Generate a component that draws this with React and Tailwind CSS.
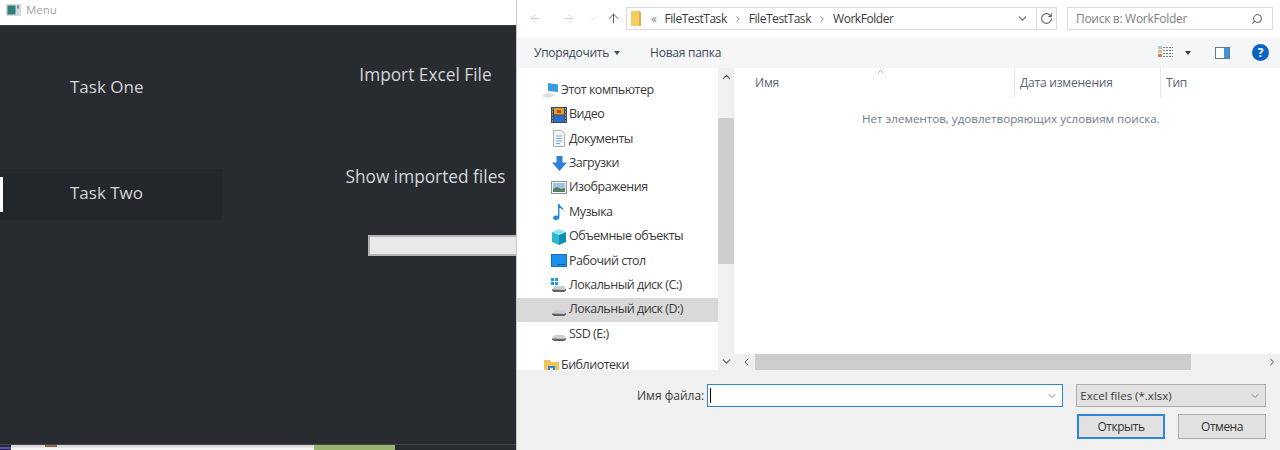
import { ArrowLeft, ArrowRight, ArrowUp, ChevronDown, ChevronUp, ChevronLeft, ChevronRight, RotateCw, Search } from "lucide-react";

const font = "font-['Open_Sans','Noto_Sans',sans-serif]";

function VideoIcon() {
  return (
    <svg width="16" height="16" viewBox="0 0 16 16">
      <rect x="0" y="0" width="16" height="16" fill="#3f4a58" />
      <rect x="3" y="1" width="10" height="6.5" fill="#d8a520" />
      <rect x="3" y="8.5" width="10" height="6.5" fill="#2a6fd0" />
      <rect x="6" y="3" width="4" height="3" fill="#c9402c" />
      <path d="M1 2h1M1 5h1M1 8h1M1 11h1M1 14h1M14 2h1M14 5h1M14 8h1M14 11h1M14 14h1" stroke="#e8e8e8" />
    </svg>
  );
}

function DocIcon() {
  return (
    <svg width="16" height="17" viewBox="0 0 16 17">
      <path d="M2.5.5h8l3 3v13h-11z" fill="#f2f4f6" stroke="#a9b1b9" />
      <path d="M5 6h6M5 8.5h6M5 11h6M5 13.5h4" stroke="#7fa7cf" strokeWidth="1.2" />
    </svg>
  );
}

function DownloadIcon() {
  return (
    <svg width="15" height="15" viewBox="0 0 15 15">
      <path d="M4.5 0h6v6.5H15L7.5 15 0 6.5h4.5z" fill="#2f7fd6" />
    </svg>
  );
}

function PicturesIcon() {
  return (
    <svg width="16" height="13" viewBox="0 0 16 13">
      <rect x=".5" y=".5" width="15" height="12" fill="#f4f6f8" stroke="#8b949c" />
      <rect x="2" y="2" width="12" height="9" fill="#9fc4e4" />
      <path d="M2 8l4-2 4 2 4-1v4H2z" fill="#55805f" />
    </svg>
  );
}

function MusicIcon() {
  return (
    <svg width="12" height="16" viewBox="0 0 12 16">
      <path d="M5 0h1.4c.3 2.6 4.6 3.2 4 7-.6-2-2.400-2.600-4-3v9.500C6.400 15 5 16 3 16s-3-.8-3-2 1.500-2.400 3.200-2.400c.7 0 1.300.1 1.800.4z" fill="#1e88e5" />
    </svg>
  );
}

function CubeIcon() {
  return (
    <svg width="16" height="16" viewBox="0 0 16 16">
      <path d="M8 0l7 3-7 3-7-3z" fill="#8ee6ee" />
      <path d="M1 3l7 3v10l-7-3z" fill="#2cb7cf" />
      <path d="M15 3l-7 3v10l7-3z" fill="#0f8fb0" />
    </svg>
  );
}

function DesktopIcon() {
  return (
    <svg width="16" height="13" viewBox="0 0 16 13">
      <rect x=".5" y=".5" width="15" height="12" fill="#1e90ee" stroke="#0f6fbf" />
      <rect x="6" y="10" width="8" height="1" fill="#0b5da3" />
    </svg>
  );
}

function DiskIcon({ windows }) {
  return (
    <svg width="16" height="15" viewBox="0 0 16 15">
      {windows && (
        <g fill="#1e9be8">
          <rect x="0" y="0" width="3" height="3" />
          <rect x="4" y="0" width="3" height="3" />
          <rect x="0" y="4" width="3" height="3" />
          <rect x="4" y="4" width="3" height="3" />
        </g>
      )}
      <path d="M1 11l3-3h9l2 3v1.500L13 14H3l-2-1.500z" fill="#c9ced2" />
      <path d="M1 11.500l12 .5 2-1v1.500L13 14H3l-2-1.500z" fill="#5c6166" />
    </svg>
  );
}

function PcIcon() {
  return (
    <svg width="18" height="15" viewBox="0 0 18 15">
      <path d="M6 0l10 1.500V9L6 8z" fill="#3a9ae0" />
      <path d="M0 13l5-3 6 1 2 1.500L7 15z" fill="#d8dde2" />
    </svg>
  );
}

function LibraryIcon() {
  return (
    <svg width="15" height="14" viewBox="0 0 15 14">
      <path d="M0 1h6l1 2h8v11H0z" fill="#f0c65a" />
      <rect x="4" y="7" width="7" height="7" fill="#2f86d6" />
      <rect x="6" y="9" width="3" height="3" fill="#f0e3b0" />
    </svg>
  );
}

const navItems = [
  { label: "Этот компьютер", icon: <PcIcon />, top: true },
  { label: "Видео", icon: <VideoIcon /> },
  { label: "Документы", icon: <DocIcon /> },
  { label: "Загрузки", icon: <DownloadIcon /> },
  { label: "Изображения", icon: <PicturesIcon /> },
  { label: "Музыка", icon: <MusicIcon /> },
  { label: "Объемные объекты", icon: <CubeIcon /> },
  { label: "Рабочий стол", icon: <DesktopIcon /> },
  { label: "Локальный диск (C:)", icon: <DiskIcon windows /> },
  { label: "Локальный диск (D:)", icon: <DiskIcon />, selected: true },
  { label: "SSD (E:)", icon: <DiskIcon /> },
];

function NavRow({ item }) {
  return (
    <div className={`flex h-[24.400px] shrink-0 items-center ${item.top ? "pl-[24px]" : "pl-[32px]"} ${item.selected ? "bg-[#d9d9d9]" : ""}`}>
      <span className="flex w-[20px] shrink-0 justify-center">{item.icon}</span>
      <span className="text-[12.500px] tracking-[-0.5px] whitespace-nowrap text-[#3a3a3a]">{item.label}</span>
    </div>
  );
}

function LeftWindow() {
  return (
    <div className="flex h-[450px] w-[517px] shrink-0 flex-col border-r border-[#c9c9c9] bg-white">
      <div className="flex h-[25px] shrink-0 items-center gap-[5px] pb-[6px] pl-[6px]">
        <svg width="15" height="12" viewBox="0 0 15 12">
          <rect width="15" height="12" fill="#d5dade" />
          <rect x="1.500" y="1.500" width="8" height="9" fill="#2f7f78" />
          <rect x="11" y="1.500" width="2" height="3" fill="#7d8a94" />
        </svg>
        <span className="text-[11.500px] text-[#a3a3a3]">Menu</span>
      </div>
      <div className="flex min-h-0 flex-1 border-t border-[#3a3c40] bg-[#282b30]">
        <div className="flex w-[222px] shrink-0 flex-col pt-[36px]">
          <div className="flex h-[50px] items-center pl-[70px] text-[17px] text-[#d3d6d9]">Task One</div>
          <div className="relative mt-[57px] flex h-[51px] items-center bg-[#23262a] pb-[3px] pl-[70px] text-[17px] text-[#d3d6d9]">
            <span className="absolute top-[8px] left-0 h-[35px] w-[3px] bg-white" />
            Task Two
          </div>
        </div>
        <div className="flex min-w-0 flex-1 flex-col items-center overflow-hidden pl-[113px]">
          <div className="mt-[35px] text-[17.300px] leading-[28px] whitespace-nowrap text-[#d3d6d9]">Import Excel File</div>
          <div className="mt-[74px] text-[17.300px] leading-[28px] whitespace-nowrap text-[#d3d6d9]">Show imported files</div>
          <div className="mt-[44px] ml-[33px] h-[21px] w-[149px] shrink-0 self-start border-2 border-r-0 border-[#b4b4b4] bg-[#e9e9e9]" />
        </div>
      </div>
      <div className="flex h-[6px] shrink-0 border-t border-[#44474b] bg-[#282b30]">
        <div className="mt-[2px] h-[2px] w-[11px] bg-[#5a4fc0]" />
        <div className="relative h-full w-[303px] bg-gradient-to-b from-[#cfcfcf] to-white">
          <span className="absolute top-0 left-[34px] h-[2px] w-[12px] bg-[#8a6a3c]" />
        </div>
        <div className="h-full w-[81px] bg-[#98b56f]" />
      </div>
    </div>
  );
}

function Dialog() {
  return (
    <div className="flex h-[450px] min-w-0 flex-1 flex-col bg-white text-[#3a3a3a]">
      <div className="flex h-[37px] shrink-0 items-center pr-[7px] pl-[11px]">
        <ArrowLeft size={15} strokeWidth={1.3} className="text-[#c9cdd1]" />
        <ArrowRight size={15} strokeWidth={1.3} className="ml-[18px] text-[#c9cdd1]" />
        <ChevronDown size={11} strokeWidth={1.3} className="ml-[12px] text-[#c9cdd1]" />
        <ArrowUp size={15} strokeWidth={1.5} className="ml-[7px] text-[#555]" />
        <div className="ml-[5px] flex h-[23px] w-[431px] items-center border border-[#d9d9d9] pr-[1px] pl-[4px] tracking-[-0.45px]">
          <svg width="10" height="15" viewBox="0 0 10 15">
            <path d="M0 0h8l2 1.500V15H0z" fill="#f3cd62" />
            <path d="M8 0l2 1.500V15H8z" fill="#e0ad3c" />
          </svg>
          <span className="ml-[10px] text-[12px] text-[#808080]">«</span>
          <span className="ml-[8px] text-[12px] text-[#3a3a3a]">FileTestTask</span>
          <ChevronRight size={10} className="mx-[6px] text-[#777]" />
          <span className="text-[12px] text-[#3a3a3a]">FileTestTask</span>
          <ChevronRight size={10} className="mx-[6px] text-[#777]" />
          <span className="text-[12px] text-[#3a3a3a]">WorkFolder</span>
          <ChevronDown size={13} className="mr-[7px] ml-auto text-[#666]" />
          <div className="flex h-full w-[19px] items-center justify-center border-l border-[#d9d9d9]">
            <RotateCw size={13} className="text-[#666]" />
          </div>
        </div>
        <div className="ml-auto flex h-[23px] w-[206px] items-center justify-between border border-[#d9d9d9] pr-[9px] pl-[8px]">
          <span className="text-[12px] tracking-[-0.3px] text-[#808080]">Поиск в: WorkFolder</span>
          <Search size={12} className="-scale-x-100 text-[#555]" />
        </div>
      </div>

      <div className="flex h-[31px] shrink-0 items-center bg-[#f5f6f7] pr-[11px] pl-[17px] tracking-[-0.25px]">
        <span className="text-[12px] text-[#3c4a5a]">Упорядочить</span>
        <span className="ml-[5px] h-0 w-0 border-x-[3px] border-t-[4px] border-x-transparent border-t-[#3c4a5a]" />
        <span className="ml-[30px] text-[12px] text-[#3c4a5a]">Новая папка</span>
        <svg className="ml-auto" width="16" height="13" viewBox="0 0 16 13">
          <path d="M5 1.500h10M5 4.500h10M5 7.500h10M5 10.500h10" stroke="#7a7a7a" strokeDasharray="2 1" />
          <rect x="0" y="0" width="4" height="3" fill="#a5c8e8" />
          <rect x="0" y="4" width="4" height="3" fill="#d9c27a" />
          <rect x="0" y="8" width="4" height="3" fill="#cc7a6a" />
        </svg>
        <span className="ml-[11px] h-0 w-0 border-x-[3.500px] border-t-[4px] border-x-transparent border-t-[#2c3e50]" />
        <div className="ml-[24px] flex h-[12px] w-[15px] border border-[#6e7780]">
          <span className="w-[8px] bg-white" />
          <span className="flex-1 bg-[#3a96dd]" />
        </div>
        <span className="ml-[22px] flex h-[17px] w-[17px] items-center justify-center rounded-full bg-[#0b63c5] text-[12px] font-bold text-white">?</span>
      </div>

      <div className="flex min-h-0 flex-1">
        <div className="flex w-[201px] shrink-0 flex-col overflow-hidden pt-[10px]">
          {navItems.map((item) => (
            <NavRow key={item.label} item={item} />
          ))}
          <div className="mt-[10px] flex shrink-0 items-center pl-[24px]">
            <span className="flex w-[20px] shrink-0 justify-center"><LibraryIcon /></span>
            <span className="text-[12.500px] tracking-[-0.5px] whitespace-nowrap text-[#3a3a3a]">Библиотеки</span>
          </div>
        </div>
        <div className="flex w-[16px] shrink-0 flex-col items-center bg-[#f0f0f0]">
          <ChevronUp size={13} strokeWidth={2} className="mt-[1px] h-[16px] text-[#555]" />
          <div className="mt-[33px] h-[146px] w-full bg-[#cdcdcd]" />
          <ChevronDown size={13} strokeWidth={2} className="mt-auto mb-[2px] text-[#555]" />
        </div>
        <div className="flex min-w-0 flex-1 flex-col">
          <div className="flex h-[30px] shrink-0 text-[12px] tracking-[-0.2px] text-[#5a6470]">
            <div className="relative flex w-[281px] items-center border-r border-[#e5e5e5] pl-[21px]">
              Имя
              <ChevronUp size={9} className="absolute -top-[1px] left-[142px] text-[#999]" />
            </div>
            <div className="flex w-[146px] items-center border-r border-[#e5e5e5] pl-[5px]">Дата изменения</div>
            <div className="flex items-center pl-[5px]">Тип</div>
          </div>
          <div className="mt-[12px] pl-[128px] text-[11.600px] whitespace-nowrap text-[#6d7b8a]">
            Нет элементов, удовлетворяющих условиям поиска.
          </div>
          <div className="mt-auto flex h-[16px] shrink-0 items-center bg-[#f0f0f0] text-[#555]">
            <ChevronLeft size={12} strokeWidth={2} className="ml-[4px] w-[17px]" />
            <div className="h-full w-[436px] bg-[#cdcdcd]" />
            <ChevronRight size={12} strokeWidth={2} className="mr-[2px] ml-auto" />
          </div>
        </div>
      </div>

      <div className="flex h-[80px] shrink-0 flex-col bg-[#f0f0f0] pr-[14px]">
        <div className="mt-[14px] flex h-[23px] items-center">
          <span className="ml-[120px] text-[12px] text-[#3a3a3a]">Имя файла:</span>
          <div className="ml-[3px] flex h-[23px] w-[356px] items-center border border-[#2f86d6] bg-white pl-[2px]">
            <span className="h-[15px] w-px bg-black" />
            <ChevronDown size={12} className="mr-[4px] ml-auto text-[#888]" />
          </div>
          <div className="ml-[13px] flex h-[23px] flex-1 items-center border border-[#adadad] bg-[#e1e1e1] pr-[4px] pl-[3px]">
            <span className="text-[11.500px] text-[#3a3a3a]">Excel files (*.xlsx)</span>
            <ChevronDown size={12} className="ml-auto text-[#888]" />
          </div>
        </div>
        <div className="mt-[7px] flex justify-end gap-[13px] tracking-[-0.5px]">
          <div className="flex h-[25px] w-[88px] items-center justify-center border-2 border-[#2f86d6] bg-[#e1e1e1] text-[12px] text-[#333]">Открыть</div>
          <div className="flex h-[25px] w-[88px] items-center justify-center border border-[#adadad] bg-[#e1e1e1] text-[12px] text-[#333]">Отмена</div>
        </div>
      </div>
    </div>
  );
}

export default function App() {
  return (
    <div className={`flex h-[450px] w-[1280px] overflow-hidden ${font}`}>
      <LeftWindow />
      <Dialog />
    </div>
  );
}
